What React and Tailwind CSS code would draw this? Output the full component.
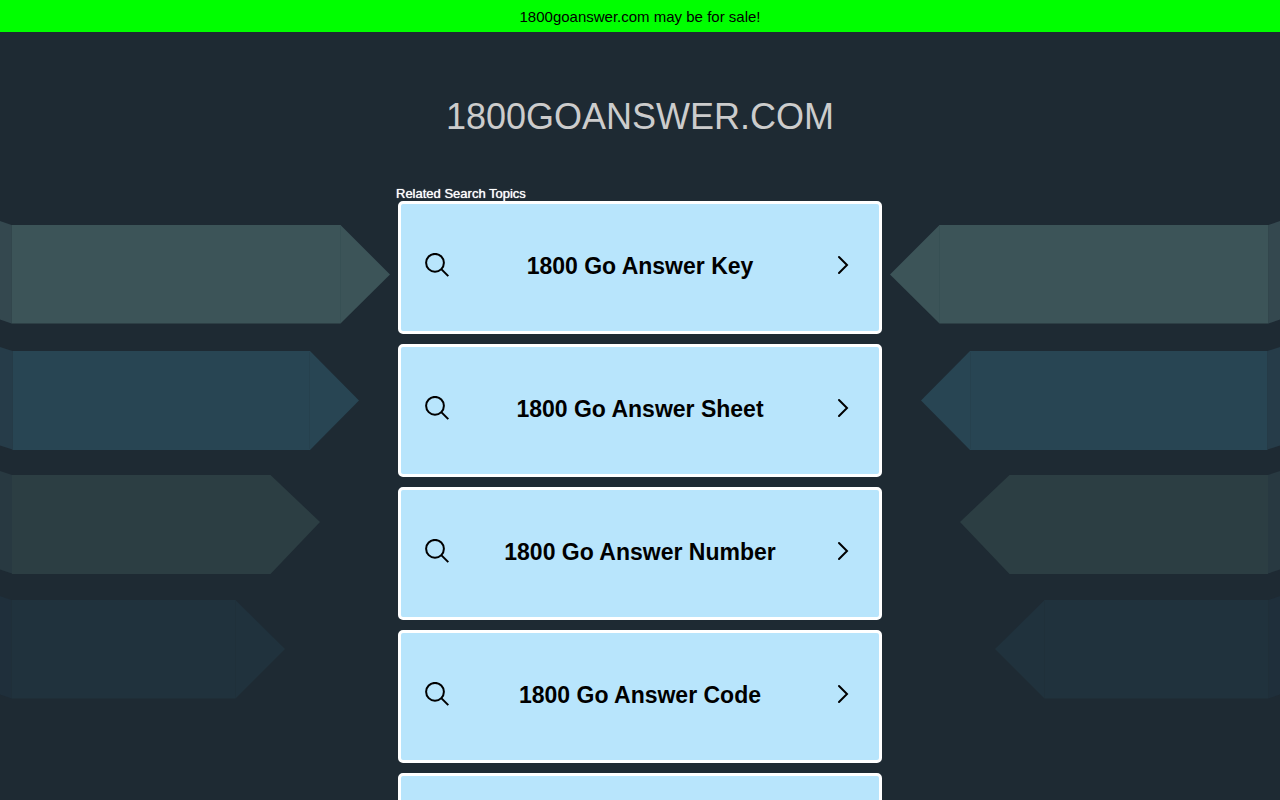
import React from "react";

const topics = [
  "1800 Go Answer Key",
  "1800 Go Answer Sheet",
  "1800 Go Answer Number",
  "1800 Go Answer Code",
  "1800 Go Answer Line",
];

const SearchIcon = () => (
  <svg className="w-6 h-6 mb-[5px] shrink-0" viewBox="0 0 24 24" fill="none" stroke="#000" strokeWidth="2" aria-hidden="true">
    <circle cx="10" cy="9.8" r="8.9" />
    <path d="M16.3 16.1 L23.3 23.1" />
  </svg>
);

const ChevronIcon = () => (
  <svg className="w-6 h-6 mb-[5px] shrink-0" viewBox="0 0 24 24" fill="none" stroke="#000" strokeWidth="2" strokeLinecap="round" aria-hidden="true">
    <path d="M8 4 L16 12 L8 20" />
  </svg>
);

// Folded ribbons that point at the list, the right side mirrors the left one
const Ribbons = ({ className }) => (
  <svg className={className} width="390" height="500" viewBox="0 0 390 500" aria-hidden="true">
    <path fill="#34484f" d="M0 11 L11.5 15 V113.5 L0 109.5 Z" />
    <path fill="#3c5458" d="M11.5 15 H340.5 L390 64.5 L340.5 113.5 H11.5 Z" />
    <path stroke="#375054" d="M340.5 16 V113" />

    <path fill="#263c49" d="M0 137 L12.5 141 V239.5 L0 235.5 Z" />
    <path fill="#284553" d="M12.5 141 H310 L359 190.5 L310 240 H12.5 Z" />
    <path stroke="#26414e" d="M309.5 142 V239" />

    <path fill="#283941" d="M0 261 L12 265 V363.5 L0 359.5 Z" />
    <path fill="#2c3e43" d="M12 265 H270.5 L320 312 L270.5 364 H12 Z" />

    <path fill="#1f2f3b" d="M0 386 L11.5 390 V488.5 L0 484.5 Z" />
    <path fill="#20323d" d="M11.5 390 H235.5 L285 439 L235.5 488.5 H11.5 Z" />
    <path stroke="#1f303a" d="M235.5 391 V488" />
  </svg>
);

const TopicCard = ({ title }) => (
  <a
    href="#"
    className="flex items-center justify-between h-[133px] px-6 rounded-[5px] border-3 border-white bg-[#b8e5fc] text-black"
  >
    <SearchIcon />
    <span className="pb-[3px] text-[23px] leading-7 font-bold text-center">{title}</span>
    <ChevronIcon />
  </a>
);

const App = () => {
  return (
    <div className="min-h-screen bg-[#1e2a33] font-['Liberation_Sans',Arial,sans-serif]">
      <a href="#" className="block h-8 pt-px bg-[#00ff00] text-center text-[15px] leading-8 text-black">
        1800goanswer.com may be for sale!
      </a>
      <h1 className="pt-16 text-center text-[36px] leading-[42px] text-[#cccccc]">
        1800GOANSWER.COM
      </h1>
      <main className="flex justify-center pt-12">
        <div className="flex flex-1 min-w-0 justify-end overflow-hidden pt-6">
          <Ribbons className="shrink-0" />
        </div>
        <section className="w-[500px] px-2 pb-10">
          <h2 className="-ml-0.5 text-[13px] leading-[15px] text-white [text-shadow:0_0_1px_#fff]">
            Related Search Topics
          </h2>
          <div className="flex flex-col gap-2.5">
            {topics.map((topic) => (
              <TopicCard key={topic} title={topic} />
            ))}
          </div>
        </section>
        <div className="flex flex-1 min-w-0 justify-start overflow-hidden pt-6">
          <Ribbons className="shrink-0 -scale-x-100" />
        </div>
      </main>
    </div>
  );
};

export default App;
